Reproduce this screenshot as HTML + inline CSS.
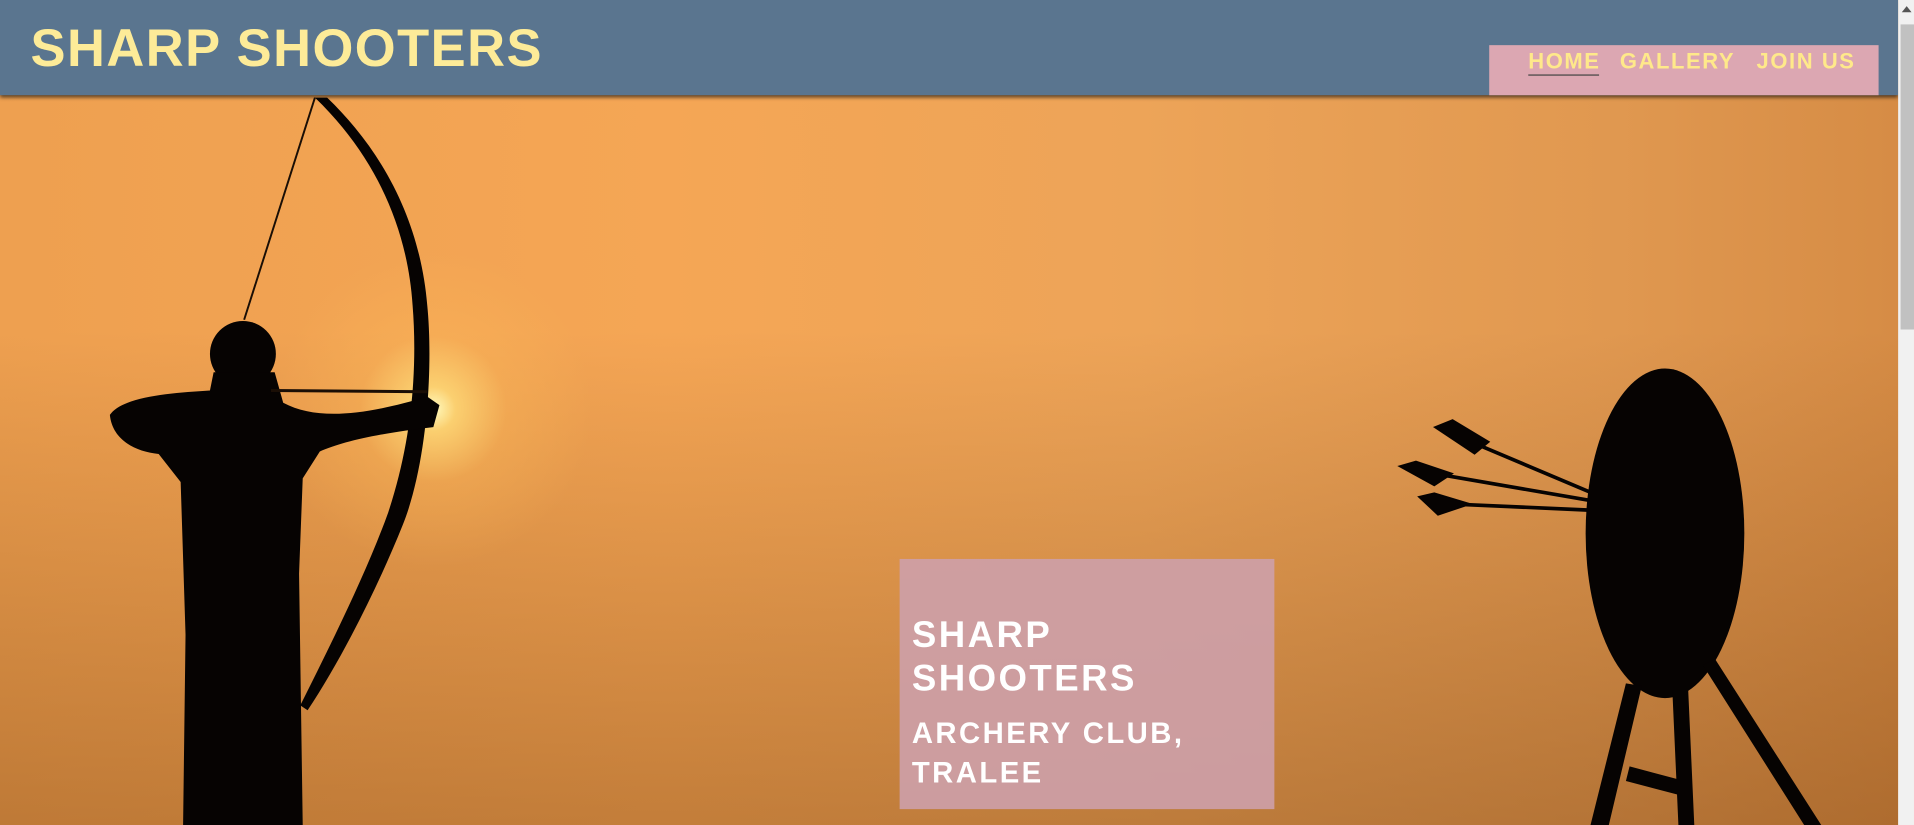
<!DOCTYPE html>
<html><head><style>
html,body{margin:0;padding:0;overflow:hidden;width:1914px;height:825px;background:#d08a40}
#s{position:absolute;left:0;top:0;width:1568px;height:676px;transform:scale(1.22066,1.2204);transform-origin:0 0;overflow:hidden;font-family:"Liberation Sans",sans-serif}
#bg{position:absolute;left:0;top:0;width:1555px;height:676px;background:
radial-gradient(circle at 355px 335px,rgba(255,250,190,1) 0,rgba(255,220,120,.8) 18px,rgba(255,190,90,.3) 60px,rgba(255,170,80,0) 130px),
linear-gradient(180deg,rgba(0,0,0,0) 40%,rgba(90,40,0,.32) 100%),
linear-gradient(90deg,#eea050 0%,#f5a655 35%,#eda458 60%,#e09850 85%,#d68c45 100%)}
header{position:absolute;left:0;top:0;width:1555px;height:78px;background:#5a758f;box-shadow:0 2px 3px rgba(0,0,0,.6)}
h1{position:absolute;left:25px;top:17px;margin:0;font-size:43px;font-weight:bold;color:#fdeb98;letter-spacing:1.2px;line-height:46px}
nav{position:absolute;left:1220px;top:37px;width:319px;height:41px;background:#dca7b2}
nav span{position:absolute;top:3px;font-size:18px;font-weight:bold;color:#ffe98a;letter-spacing:1.3px;line-height:20px}
#u{position:absolute;left:1252px;top:61px;width:58px;height:1px;background:#444}
#box{position:absolute;left:737px;top:458px;width:307px;height:205px;background:rgba(205,160,170,.9)}
#box div{position:absolute;left:10px;color:#fff;font-weight:bold;letter-spacing:2px;white-space:nowrap}
#sb{position:absolute;left:1555px;top:0;width:13px;height:676px;background:#f1f1f1}
#th{position:absolute;left:1557px;top:20px;width:11px;height:250px;background:#c1c1c1}
</style></head><body><div id="s">
<div id="bg"></div>
<svg width="1555" height="676" style="position:absolute;left:0;top:0">
<g fill="#060302">
<path d="M258,80 L268,80 C320,130 345,190 350,250 C355,300 350,380 330,430 C310,480 280,540 252,582 L246,578 C270,530 300,470 318,420 C338,360 342,300 338,250 C334,190 310,130 258,80Z"/>
<circle cx="199" cy="290" r="27"/>
<path d="M175,305 L225,305 L232,330 C260,345 300,340 350,325 L360,332 L355,350 C310,355 280,362 262,370 L248,392 L245,470 L248,676 L150,676 L152,520 L148,395 L130,372 C110,370 92,360 90,340 C100,325 140,322 172,320Z"/>
</g>
<line x1="258" y1="80" x2="200" y2="262" stroke="#1a0e05" stroke-width="1.6"/>
<line x1="222" y1="320" x2="350" y2="321" stroke="#1a0e05" stroke-width="2.5"/>
<g fill="#060302">
<ellipse cx="1364" cy="437" rx="65" ry="135"/>
<path d="M1332,560 L1345,562 L1318,676 L1303,676Z M1370,565 L1383,565 L1388,676 L1375,676Z M1395,545 L1405,540 L1492,676 L1478,676Z M1335,628 L1380,640 L1378,652 L1332,640Z"/>
</g>
<g stroke="#060302" stroke-width="3" fill="#060302">
<line x1="1205" y1="362" x2="1302" y2="403"/>
<line x1="1175" y1="388" x2="1302" y2="410"/>
<line x1="1190" y1="413" x2="1302" y2="418"/>
<path d="M1175,350 L1190,344 L1220,362 L1208,372Z M1146,382 L1160,378 L1190,388 L1175,398Z M1162,407 L1175,404 L1205,413 L1178,422Z" stroke-width="1"/>
</g>
</svg>
<header><h1>SHARP SHOOTERS</h1></header>
<nav><span style="left:32px">HOME</span><span style="left:107px">GALLERY</span><span style="left:219px">JOIN US</span></nav>
<div id="u"></div>
<div id="box">
<div style="top:45px;font-size:30px;line-height:36px">SHARP<br>SHOOTERS</div>
<div style="top:128px;font-size:24px;line-height:32px">ARCHERY CLUB,<br>TRALEE</div>
</div>
<div id="sb"></div><div id="th"></div>
<div style="position:absolute;left:1558px;top:5px;width:0;height:0;border-left:4px solid transparent;border-right:4px solid transparent;border-bottom:5px solid #555"></div>
</div></body></html>
